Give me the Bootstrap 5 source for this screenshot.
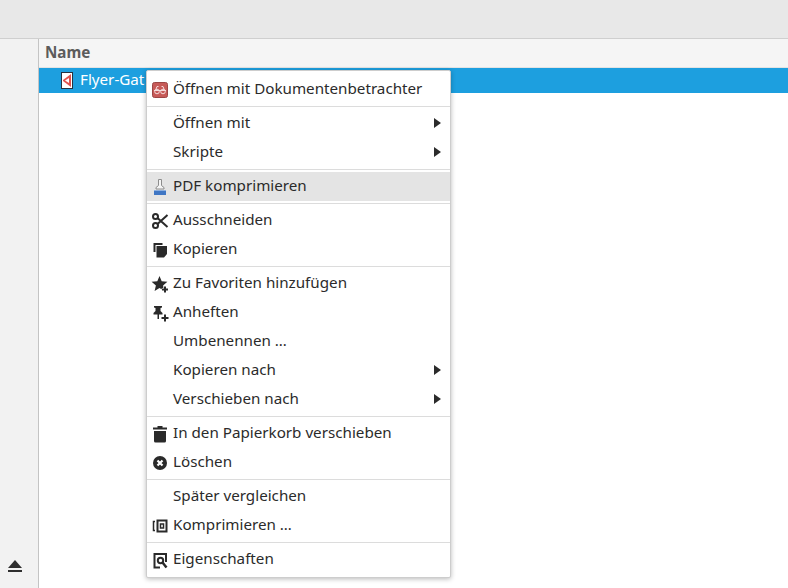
<!DOCTYPE html>
<html lang="de">
<head>
  <meta charset="UTF-8">
  <meta name="viewport" content="width=device-width, initial-scale=1">
  <title>Dateien</title>
  <link href="https://cdn.jsdelivr.net/npm/bootstrap@5.3.3/dist/css/bootstrap.min.css" rel="stylesheet">
  <style>
    html, body { height: 100%; overflow: hidden; }
    body { font-family: "Noto Sans", "Open Sans", sans-serif; font-size: 15.2px; color: #3d3d3d; background: #fff; }
    .shell { height: 588px; position: relative; }
    .topbar { height: 39px; background: #e8e8e8; border-bottom: 1px solid #cfcfcf; }
    .sidepane { width: 39px; background: #f2f2f2; border-right: 1px solid #c4c4c4; padding: 0 0 15px 8px; }
    .head-name { height: 29px; padding-left: 6px; font-weight: 700; color: #5c5c5c; border-bottom: 1px solid #e3e3e3; background: #f5f5f5; line-height: 26px; }
    .file-row { height: 25px; background: #1d9fdf; color: #fff; padding-left: 22px; gap: 7px; }
    .file-name { padding-bottom: 3px; }
    .ctx-menu { position: absolute; left: 146px; top: 70px; width: 305px; height: 508px; margin: 0; padding: 4px 0 3px; background: #fff; border: 1px solid #cdcdcd; border-radius: 2px; box-shadow: 0 1px 5px rgba(0,0,0,.28); list-style: none; font-size: 15.2px; z-index: 5; }
    .ctx-menu .dropdown-divider { margin: 2px 0; border-top: 1px solid #dcdcdc; opacity: 1; }
    .ctx-item { height: 29px; padding: 0 4px; color: #2b2b2b; gap: 4px; }
    .ctx-item.is-hover { background: #e4e4e4; }
    .ctx-ico { width: 18px; height: 18px; flex: none; display: block; }
    .ctx-label { flex: 1; white-space: nowrap; line-height: 25px; padding-bottom: 3px; }
    .ctx-arrow { width: 0; height: 0; border-left: 7px solid #2b2b2b; border-top: 5px solid transparent; border-bottom: 5px solid transparent; margin: 0 5px 1px 0; }
  </style>
</head>
<body>
<div class="shell d-flex flex-column">
  <div class="topbar"></div>
  <div class="d-flex flex-grow-1">
    <div class="sidepane d-flex align-items-end">
      <svg width="14" height="13" viewBox="0 0 14 13"><path fill="#2e2e2e" d="M7 0l7 8H0z"/><rect fill="#2e2e2e" y="10" width="14" height="2"/></svg>
    </div>
    <div class="flex-grow-1">
      <div class="head-name">Name</div>
      <div class="file-row d-flex align-items-center">
        <svg width="12" height="17" viewBox="0 0 12 17"><rect x=".5" y=".5" width="11" height="16" fill="#fff" stroke="#26323f"/><path fill="#e0524d" d="M10 2v13L2 9V8z"/><path fill="#fff" d="M8 6v5L4 8.500z"/></svg>
        <span class="file-name">Flyer-Gat</span>
      </div>
    </div>
  </div>

  <ul class="ctx-menu">
    <li class="ctx-item d-flex align-items-center">
      <svg class="ctx-ico" viewBox="0 0 18 18"><rect x="1.500" y="1.500" width="15" height="15" rx="2" fill="#c75a58" stroke="#9c4645"/><path fill="none" stroke="#f6dcdc" d="M3 9.500h12M4.500 9.500l1.500-4h1.500M13.500 9.500l-1.500-4h-1.500"/><circle cx="6" cy="10.500" r="2.300" fill="none" stroke="#f6dcdc"/><circle cx="12" cy="10.500" r="2.300" fill="none" stroke="#f6dcdc"/></svg>
      <span class="ctx-label">Öffnen mit Dokumentenbetrachter</span>
    </li>
    <li><hr class="dropdown-divider"></li>
    <li class="ctx-item d-flex align-items-center"><span class="ctx-ico"></span><span class="ctx-label">Öffnen mit</span><span class="ctx-arrow"></span></li>
    <li class="ctx-item d-flex align-items-center"><span class="ctx-ico"></span><span class="ctx-label">Skripte</span><span class="ctx-arrow"></span></li>
    <li><hr class="dropdown-divider"></li>
    <li class="ctx-item is-hover d-flex align-items-center">
      <svg class="ctx-ico" viewBox="0 0 18 18"><path fill="#f4f4f4" stroke="#8c8c8c" d="M7.500 1.500h3v6l2.500 2v1.500H5V9.500l2.500-2z"/><path fill="#3f76c4" d="M3 12h12v5H3z"/><path fill="#8db0e0" d="M3 12h12v1H3z"/></svg>
      <span class="ctx-label">PDF komprimieren</span>
    </li>
    <li><hr class="dropdown-divider"></li>
    <li class="ctx-item d-flex align-items-center">
      <svg class="ctx-ico" viewBox="0 0 18 18"><g fill="none" stroke="#2a2a2a" stroke-width="2"><circle cx="4.500" cy="4.500" r="2.500"/><circle cx="4.500" cy="13.500" r="2.500"/><path d="M6.500 6l10 9M6.500 12l10-9"/></g></svg>
      <span class="ctx-label">Ausschneiden</span>
    </li>
    <li class="ctx-item d-flex align-items-center">
      <svg class="ctx-ico" viewBox="0 0 18 18"><path fill="#2a2a2a" d="M2.500 2h9v2H4.500v7h-2z"/><path fill="#2a2a2a" d="M5.500 5H16v8l-3 3.500H5.500z"/></svg>
      <span class="ctx-label">Kopieren</span>
    </li>
    <li><hr class="dropdown-divider"></li>
    <li class="ctx-item d-flex align-items-center">
      <svg class="ctx-ico" viewBox="0 0 18 18"><path fill="#2a2a2a" d="M8.500 1l2.200 5.300 5.700.4-4.300 3.700 1.300 5.600-4.900-3-4.900 3 1.300-5.600L.6 6.700l5.700-.4z"/><path fill="#2a2a2a" stroke="#fff" stroke-width="1" paint-order="stroke" d="M13 11.500h2v2h2v2h-2v2h-2v-2h-2v-2h2z"/></svg>
      <span class="ctx-label">Zu Favoriten hinzufügen</span>
    </li>
    <li class="ctx-item d-flex align-items-center">
      <svg class="ctx-ico" viewBox="0 0 18 18"><path fill="#2a2a2a" d="M3 2h8v1.500L9.500 4v3L11.500 9v1.500H8V15H6.500v-4.500H2.500V9l2-2V4L3 3.500z"/><path fill="#2a2a2a" d="M13 10.500h2V13h2.500v2H15v2.500h-2V15h-2.500v-2H13z"/></svg>
      <span class="ctx-label">Anheften</span>
    </li>
    <li class="ctx-item d-flex align-items-center"><span class="ctx-ico"></span><span class="ctx-label">Umbenennen …</span></li>
    <li class="ctx-item d-flex align-items-center"><span class="ctx-ico"></span><span class="ctx-label">Kopieren nach</span><span class="ctx-arrow"></span></li>
    <li class="ctx-item d-flex align-items-center"><span class="ctx-ico"></span><span class="ctx-label">Verschieben nach</span><span class="ctx-arrow"></span></li>
    <li><hr class="dropdown-divider"></li>
    <li class="ctx-item d-flex align-items-center">
      <svg class="ctx-ico" viewBox="0 0 18 18"><path fill="#2a2a2a" d="M2 2.500h4.500V1h5v1.500H16v2H2zM3 6h12v10a1.500 1.500 0 0 1-1.500 1.500h-9A1.500 1.500 0 0 1 3 16z"/></svg>
      <span class="ctx-label">In den Papierkorb verschieben</span>
    </li>
    <li class="ctx-item d-flex align-items-center">
      <svg class="ctx-ico" viewBox="0 0 18 18"><circle cx="9" cy="9" r="7" fill="#2a2a2a"/><path stroke="#fff" stroke-width="2.200" d="M6.500 6.500l5 5M11.500 6.500l-5 5"/></svg>
      <span class="ctx-label">Löschen</span>
    </li>
    <li><hr class="dropdown-divider"></li>
    <li class="ctx-item d-flex align-items-center"><span class="ctx-ico"></span><span class="ctx-label">Später vergleichen</span></li>
    <li class="ctx-item d-flex align-items-center">
      <svg class="ctx-ico" viewBox="0 0 18 18"><g fill="none" stroke="#2a2a2a"><rect x="6.500" y="3.500" width="9" height="11" stroke-width="2"/><rect x="9.500" y="7" width="3" height="4" stroke-width="1.500"/><path stroke-width="1.500" d="M4 4.500h-1.500v9H4"/></g></svg>
      <span class="ctx-label">Komprimieren …</span>
    </li>
    <li><hr class="dropdown-divider"></li>
    <li class="ctx-item d-flex align-items-center">
      <svg class="ctx-ico" viewBox="0 0 18 18"><path fill="none" stroke="#2a2a2a" stroke-width="2" d="M15 11V3H3.500v13.500H9"/><circle cx="9.500" cy="9.500" r="2.700" fill="none" stroke="#2a2a2a" stroke-width="2"/><path stroke="#2a2a2a" stroke-width="2.500" d="M11.500 11.500l4 5"/></svg>
      <span class="ctx-label">Eigenschaften</span>
    </li>
  </ul>
</div>
<script src="https://cdn.jsdelivr.net/npm/bootstrap@5.3.3/dist/js/bootstrap.bundle.min.js"></script>
</body>
</html>
